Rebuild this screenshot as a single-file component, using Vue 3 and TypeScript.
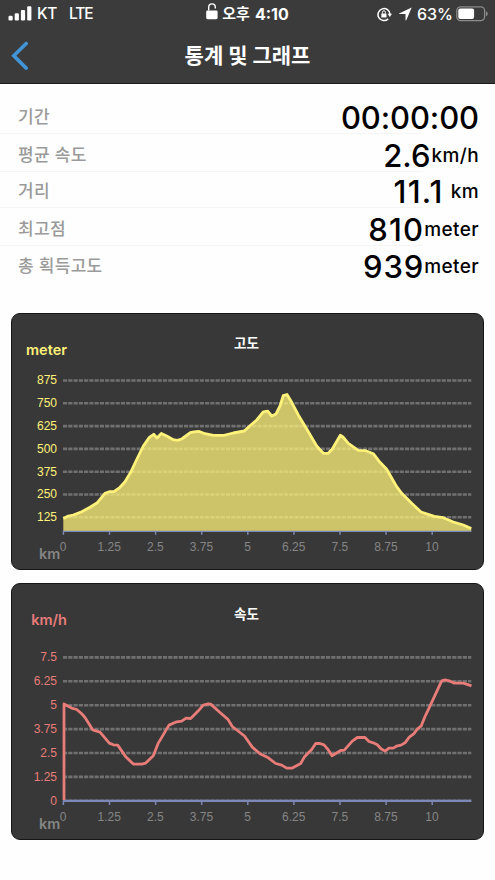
<script setup lang="ts">
interface Tick {
  label: string
  pos: number
}
interface Chart {
  id: string
  title: string
  titleY: number
  unit: string
  unitX: number
  unitY: number
  color: string
  axisY: number
  tickEnd: number
  labelY: number
  axisWidth: number
  filled: boolean
  yTicks: Tick[]
  points: string
}
interface Stat {
  label: string
  value: string
  unit: string
  kind: string
}

const stats: Stat[] = [
  { label: '기간', value: '00:00:00', unit: '', kind: 'duration' },
  { label: '평균 속도', value: '2.6', unit: 'km/h', kind: 'speed' },
  { label: '거리', value: '11.1', unit: 'km', kind: 'distance' },
  { label: '최고점', value: '810', unit: 'meter', kind: 'peak' },
  { label: '총 획득고도', value: '939', unit: 'meter', kind: 'gain' },
]

const xTicks: Tick[] = ['0', '1.25', '2.5', '3.75', '5', '6.25', '7.5', '8.75', '10'].map(
  (label, i) => ({ label, pos: 52.9 + i * 46.1 }),
)

const charts: Chart[] = [
  {
    id: 'altitude', title: '고도', titleY: 34.5, unit: 'meter', unitX: 56, unitY: 41.7, color: '#fff27a',
    axisY: 218.3, tickEnd: 221.8, labelY: 237.5, axisWidth: 1.2, filled: true,
    yTicks: ['875', '750', '625', '500', '375', '250', '125'].map((label, i) => ({ label, pos: 67.5 + i * 22.8 })),
    points:
      '52.3,205.5 57.3,203 62.3,202 70.7,198.7 79,194.3 86.3,189.7 94,180.3 98.3,178.7 103,178.7 109,174.3 114,168.7 119.7,159.3 125,148 132.3,133 138,124.7 142.7,121.3 146,125 150.3,120.5 155.7,123 162.3,126.7 166.3,127.3 170.7,126 179.3,119.7 183,118.8 187.7,118.3 194,120.7 202.3,122.3 213,122.3 222.3,120 233.3,118 239,112.7 245.7,107 252.3,98.9 256.7,98.2 260.7,103 265,101 269,93 272.3,82.5 276,81.5 280.7,89.3 287.3,102 295.7,116 305.7,133 312.3,140.3 317.3,140.3 321.3,136 329.3,122.3 332,124 337.3,130.3 347.3,137.3 354.7,137.7 362.3,140.7 369,149.3 375.7,156.3 385.7,173.7 390.7,180.3 400.7,190.3 410,199 423.3,203.3 432.3,204.7 442.3,209 452.3,212 460.3,215.5',
  },
  {
    id: 'speed', title: '속도', titleY: 35.5, unit: 'km/h', unitX: 56, unitY: 42, color: '#e87c79',
    axisY: 217.8, tickEnd: 221.9, labelY: 238, axisWidth: 2.2, filled: false,
    yTicks: ['7.5', '6.25', '5', '3.75', '2.5', '1.25', '0'].map((label, i) => ({ label, pos: 74.4 + i * 23.9 })),
    points:
      '53,217 53,121 60.7,125.1 65.7,126.5 70.7,130.8 74,134.5 81.7,146.8 89,149.1 98.3,160.1 102.3,161.8 106.7,162.1 115,174.1 122.3,181.1 130.7,181.1 134.7,180.1 142.3,172.8 147.3,160.1 158,142.1 165.7,138.8 170.7,138.1 175,135.1 179.7,135.5 187.3,127.8 192.3,122.1 197.3,120.8 199.7,121.1 209,129.5 216.7,136.1 221.3,143.5 233.5,153 241.3,164.1 249,170.8 257.3,174.8 264.7,180.5 270.7,182.1 275.7,185.1 281.3,185.1 289.7,180.5 293.3,174.1 300.7,166.5 304.7,160.5 309,160.5 313,161.8 316.7,166.1 321,172.8 329.7,167.5 333.3,167.1 341.3,158.1 346.3,154.5 354,154.5 358,158.5 362.3,159.8 366.3,161.8 370,165.8 374,168.1 378,165.1 382.3,165.1 386.3,162.8 390,162.1 394,159.8 398.3,154.1 402.7,150.8 406.3,146.1 410.3,142.8 414,133.5 416.5,128.3 430.7,97.8 434,96.8 438,97.8 443.3,100.1 452.3,100.1 460.5,102.8',
  },
]

function areaPoints(chart: Chart): string {
  return `52.3,${chart.axisY} ${chart.points} 460.3,${chart.axisY}`
}
</script>

<template>
  <main class="screen">
    <header class="top">
      <div class="status">
        <div class="side carrier">
          <svg class="signal" width="24" height="15" viewBox="0 0 24 15">
            <rect x="0.5" y="9.8" width="4.2" height="4.7" rx="1.2" />
            <rect x="6.7" y="7.2" width="4.2" height="7.3" rx="1.2" />
            <rect x="12.9" y="3.9" width="4.2" height="10.6" rx="1.2" />
            <rect x="19.2" y="0.2" width="4.2" height="14.3" rx="1.2" />
          </svg>
          <span class="kt">KT</span>
          <span class="lte">LTE</span>
        </div>
        <div class="clock">
          <svg width="13" height="18" viewBox="0 0 13 18">
            <rect x="0.2" y="8.4" width="11.4" height="8.8" rx="1.4" />
            <path d="M2.7 8.5V5.2a3.3 3.3 0 0 1 6.6 0v1.4" class="line" stroke-width="1.4" />
          </svg>
          <span class="meridiem">오후</span>
          <span class="time">4:10</span>
        </div>
        <div class="side power">
          <svg class="rotation" width="15" height="15" viewBox="0 0 15 15">
            <path d="M11.2 11.9A6 6 0 1 1 13 7.3" class="line" stroke-width="1.5" />
            <path d="M10.6 6.7h4.4l-2.2 3.2z" />
            <rect x="4.3" y="6.5" width="5.2" height="4" rx="0.5" />
            <path d="M5.4 6.6V5.3a1.5 1.5 0 0 1 3 0v1.3" class="line" stroke-width="1" />
          </svg>
          <svg class="location" width="13" height="14" viewBox="0 0 13 14">
            <path d="M12.7 0.4 7.4 13.1c-.3.6-.9.5-.9-.1V7.1H.7c-.7 0-.8-.6-.1-.9z" />
          </svg>
          <span class="percent">63%</span>
          <svg width="33" height="16" viewBox="0 0 33 16">
            <rect x="0.8" y="0.8" width="27.8" height="13.8" rx="3.8" class="cell" />
            <rect x="2.3" y="2.4" width="15.8" height="10.6" rx="2" />
            <path d="M30 5.2c2.3.8 2.3 4.2 0 5z" class="nub" />
          </svg>
        </div>
      </div>
      <nav class="nav">
        <svg class="back" width="18" height="30" viewBox="0 0 18 30">
          <path d="M15.2 2.4 2.8 14.8l12.4 12.3" />
        </svg>
        <h1>통계 및 그래프</h1>
      </nav>
    </header>

    <section class="stats">
      <div v-for="s in stats" :key="s.kind" class="row" :class="s.kind">
        <span class="label">{{ s.label }}</span>
        <span class="reading">
          <span class="value">{{ s.value }}</span>
          <span v-if="s.unit" class="unit">{{ s.unit }}</span>
        </span>
      </div>
    </section>

    <section class="charts">
      <article v-for="c in charts" :key="c.id" class="card">
        <svg width="471" height="255" viewBox="1 1 471 255">
          <text class="title" x="235.5" :y="c.titleY" text-anchor="middle">{{ c.title }}</text>
          <text class="axis-unit" :x="c.unitX" :y="c.unitY" text-anchor="end" :fill="c.color">{{ c.unit }}</text>
          <g v-for="t in c.yTicks" :key="t.label">
            <line x1="52" x2="460.3" :y1="t.pos" :y2="t.pos" class="grid" />
            <text class="tick" x="46" :y="t.pos + 3.9" text-anchor="end" :fill="c.color">{{ t.label }}</text>
          </g>
          <polygon v-if="c.filled" :points="areaPoints(c)" :fill="c.color" fill-opacity="0.75" />
          <line x1="52" x2="460.3" :y1="c.axisY" :y2="c.axisY" class="axis" :stroke-width="c.axisWidth" />
          <g v-for="t in xTicks" :key="t.label">
            <line :x1="t.pos - 0.5" :x2="t.pos - 0.5" :y1="c.axisY" :y2="c.tickEnd" class="axis" stroke-width="1.5" />
            <text class="tick muted" :x="t.pos - 0.7" :y="c.labelY" text-anchor="middle">{{ t.label }}</text>
          </g>
          <polyline :points="c.points" :stroke="c.color" class="curve" />
          <text class="axis-unit muted" x="38.7" y="246" text-anchor="middle">km</text>
        </svg>
      </article>
    </section>
  </main>
</template>

<style>
body {
  margin: 0;
  background: #fff;
}
</style>

<style scoped>
.screen {
  width: 495px;
  height: 880px;
  overflow: hidden;
  background: #fefefe;
  font-family: Inter, "Noto Sans CJK KR", sans-serif;
}
svg {
  display: block;
  flex: none;
}
.top {
  box-sizing: border-box;
  height: 84px;
  background: #3b3b3b;
  border-bottom: 1px solid #1c1c1c;
  color: #fff;
  fill: #fff;
}
.status {
  display: flex;
  align-items: center;
  height: 28px;
  padding: 0 8px;
  font-size: 16px;
  line-height: 28px;
}
.side {
  flex: 1;
  display: flex;
  align-items: center;
}
.signal {
  margin: -2px 5px 0 0;
}
.kt {
  width: 32px;
}
.kt,
.lte {
  font-size: 15.5px;
  font-weight: 500;
}
.kt {
  letter-spacing: -0.4px;
}
.lte {
  letter-spacing: -1.1px;
}
.clock {
  display: flex;
  align-items: center;
  font-weight: 700;
}
.clock svg {
  margin-top: -6px;
  margin-right: 3px;
}
.meridiem {
  font-size: 15px;
  margin-right: 5px;
}
.time {
  font-size: 16px;
}
.power {
  justify-content: flex-end;
}
.rotation {
  margin-right: 7px;
}
.location {
  margin-right: 5px;
}
.percent {
  font-size: 16px;
  font-weight: 500;
  margin-right: 3px;
}
.power svg:last-child {
  margin-top: -1px;
  margin-right: -2px;
}
.line {
  fill: none;
  stroke: #fff;
}
.cell {
  fill: none;
  stroke: #8b8b8b;
  stroke-width: 1.3;
}
.nub {
  fill: #8b8b8b;
}
.nav {
  display: grid;
  grid-template-columns: 18px 1fr 18px;
  align-items: center;
  height: 55px;
  padding: 0 11px;
}
.back {
  fill: none;
  stroke: #4194d6;
  stroke-width: 3.6;
  stroke-linecap: round;
}
h1 {
  margin: 0;
  text-align: center;
  font-size: 21px;
  line-height: 30px;
  font-weight: 700;
}
.stats {
  box-sizing: border-box;
  height: 229px;
  padding-top: 12px;
}
.row {
  box-sizing: border-box;
  display: flex;
  align-items: center;
  justify-content: space-between;
  height: 38px;
  padding: 4px 16px 0 18px;
  border-bottom: 1px solid transparent;
  border-image: linear-gradient(to right, #f5f5f5 422px, transparent 422px) 1;
  border-width: 0 0 1px;
}
.distance {
  height: 36px;
  padding-top: 3px;
}
.gain {
  border-image: none;
  padding-top: 3px;
}
.label {
  color: #9a9a9a;
  font-size: 17px;
  font-weight: 500;
  line-height: 26px;
  letter-spacing: 0.3px;
}
.reading {
  display: flex;
  align-items: center;
  padding-top: 2px;
  color: #000;
}
.value {
  font-size: 31px;
  font-weight: 500;
  line-height: 34px;
}
.duration .value {
  letter-spacing: -0.1px;
}
.distance .value,
.peak .value {
  letter-spacing: 1.2px;
}
.gain .value {
  letter-spacing: 0.9px;
}
.unit {
  font-size: 19px;
  font-weight: 500;
  line-height: 34px;
  letter-spacing: 0.4px;
}
.speed .unit {
  margin-left: 1px;
}
.distance .unit {
  margin-left: 7px;
}
.charts {
  display: flex;
  flex-direction: column;
  gap: 13px;
  padding: 0 11px;
}
.card {
  box-sizing: border-box;
  height: 257px;
  overflow: hidden;
  border: 1px solid #161616;
  border-radius: 9px;
  background: #383838;
}
.title {
  fill: #fff;
  font-size: 13.5px;
  font-weight: 700;
}
.tick {
  font-family: "Liberation Sans", sans-serif;
  font-size: 12px;
}
.axis-unit {
  font-size: 14.5px;
  font-weight: 600;
}
.muted {
  fill: #858585;
}
.grid {
  stroke: #707070;
  stroke-width: 2.6;
  stroke-dasharray: 4.2 1.06;
}
.axis {
  stroke: #7c88b5;
}
.curve {
  fill: none;
  stroke-width: 2.8;
  stroke-linejoin: round;
}
</style>
